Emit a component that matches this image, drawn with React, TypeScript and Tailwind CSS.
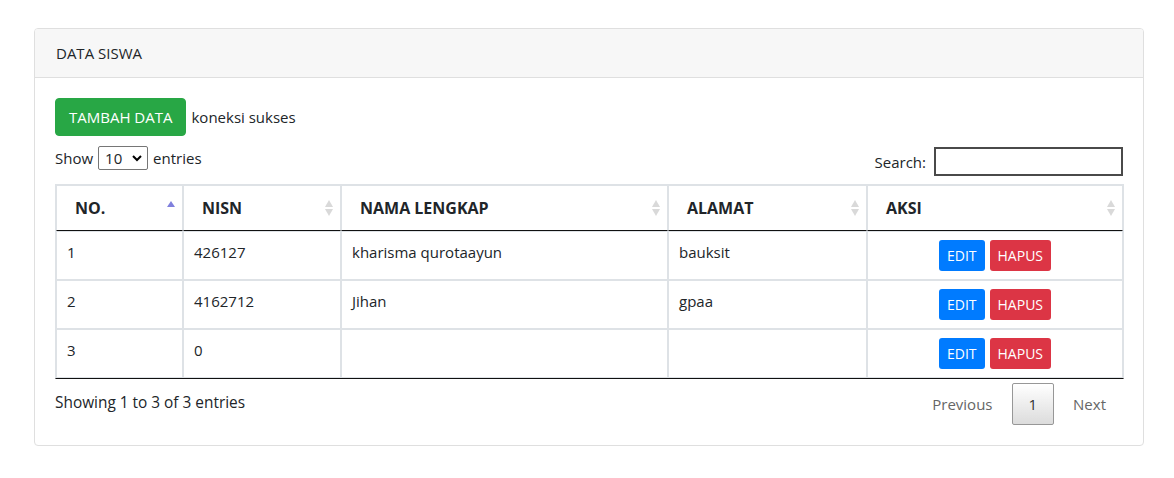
import React from "react";

const font = { fontFamily: '"Open Sans", "Noto Sans", sans-serif' };

function SortBoth() {
  return (
    <svg width="8" height="16" viewBox="0 0 8 16" className="shrink-0">
      <path d="M4 0 L8 7 L0 7Z" fill="#d9d9d9" />
      <path d="M0 9 L8 9 L4 16Z" fill="#d9d9d9" />
    </svg>
  );
}

function SortAsc() {
  return (
    <svg width="8" height="16" viewBox="0 0 8 16" className="shrink-0">
      <path d="M4 1 L8 7 L0 7Z" fill="#8080dd" />
    </svg>
  );
}

type Row = { no: string; nisn: string; nama: string; alamat: string };
const rows: Row[] = [
  { no: "1", nisn: "426127", nama: "kharisma qurotaayun", alamat: "bauksit" },
  { no: "2", nisn: "4162712", nama: "Jihan", alamat: "gpaa" },
  { no: "3", nisn: "0", nama: "", alamat: "" },
];

function Th({ label, w, asc }: { label: string; w: string; asc?: boolean }) {
  return (
    <th
      className={`${w} border border-[#dee2e6] border-b-[#111] pl-[18px] pr-[7px] py-[10px] text-left font-bold text-[16px] leading-[24px] text-[#212529]`}
    >
      <div className="flex items-center justify-between">
        <span>{label}</span>
        {asc ? <SortAsc /> : <SortBoth />}
      </div>
    </th>
  );
}

const tdText = "border border-[#dee2e6] px-[10px] py-[8px] align-top text-[15px] leading-[24px]";

export default function App() {
  return (
    <div className="min-h-[478px] bg-white pl-[34px] pt-[28px]" style={font}>
      <div className="w-[1110px] rounded-[4px] border border-[#dfdfdf] text-[#212529]">
        <div className="border-b border-[#dfdfdf] bg-[#f7f7f7] px-[21px] py-[12px] text-[15px] leading-[24px] rounded-t-[3px]">
          DATA SISWA
        </div>
        <div className="p-[20px]">
          <div className="flex items-baseline">
            <button className="h-[38px] rounded-[4px] border border-[#28a745] bg-[#28a745] px-[13px] text-[15px] leading-[24px] text-white">
              TAMBAH DATA
            </button>
            <span className="ml-[5px] text-[15px] leading-[24px]">koneksi sukses</span>
          </div>

          <div className="mt-[10px] flex items-start justify-between">
            <div className="flex h-[24px] items-center text-[15px]">
              <span>Show</span>
              <div className="ml-[5px] mr-[5px] flex h-[24px] w-[50px] items-center justify-between rounded-[2px] border border-[#767676] bg-white pl-[6px] pr-[5px] text-[15px]">
                <span>10</span>
                <svg width="10" height="7" viewBox="0 0 10 7">
                  <path d="M1 1 L5 5 L9 1" fill="none" stroke="#000" strokeWidth="2" />
                </svg>
              </div>
              <span>entries</span>
            </div>
            <div className="flex items-center pt-[1px] text-[15px]">
              <span className="mr-[8px] mt-[1px]">Search:</span>
              <div className="h-[29px] w-[189px] border-2 border-[#4a4a4a] bg-white" />
            </div>
          </div>

          <table className="mt-[8px] w-[1069px] table-fixed border-separate border-spacing-0 border border-[#dee2e6] border-b-[#111]">
            <thead>
              <tr>
                <Th label="NO." w="w-[127px]" asc />
                <Th label="NISN" w="w-[158px]" />
                <Th label="NAMA LENGKAP" w="w-[327px]" />
                <Th label="ALAMAT" w="w-[199px]" />
                <Th label="AKSI" w="w-[256px]" />
              </tr>
            </thead>
            <tbody>
              {rows.map((r) => (
                <tr key={r.no}>
                  <td className={tdText}>{r.no}</td>
                  <td className={tdText}>{r.nisn}</td>
                  <td className={tdText}>{r.nama}</td>
                  <td className={tdText}>{r.alamat}</td>
                  <td className="border border-[#dee2e6] px-[10px] py-[8px] align-top text-center">
                    <div className="flex justify-center gap-[5px]">
                      <button className="h-[31px] rounded-[3px] bg-[#007bff] px-[8px] text-[14px] leading-[21px] text-white">
                        EDIT
                      </button>
                      <button className="h-[31px] rounded-[3px] bg-[#dc3545] px-[8px] text-[14px] leading-[21px] text-white">
                        HAPUS
                      </button>
                    </div>
                  </td>
                </tr>
              ))}
            </tbody>
          </table>

          <div className="flex items-start justify-between">
            <div className="pt-[12px] text-[15.4px] leading-[24px]">Showing 1 to 3 of 3 entries</div>
            <div className="flex items-center pt-[4px] text-[15px] leading-[24px]">
              <span className="border border-transparent px-[16px] py-[8px] text-[#666]">Previous</span>
              <span className="ml-[2px] rounded-[2px] border border-[#979797] bg-gradient-to-b from-white to-[#dcdcdc] px-[16px] py-[8px] text-[#333]">
                1
              </span>
              <span className="ml-[2px] border border-transparent px-[16px] py-[8px] text-[#666]">Next</span>
            </div>
          </div>
        </div>
      </div>
    </div>
  );
}
